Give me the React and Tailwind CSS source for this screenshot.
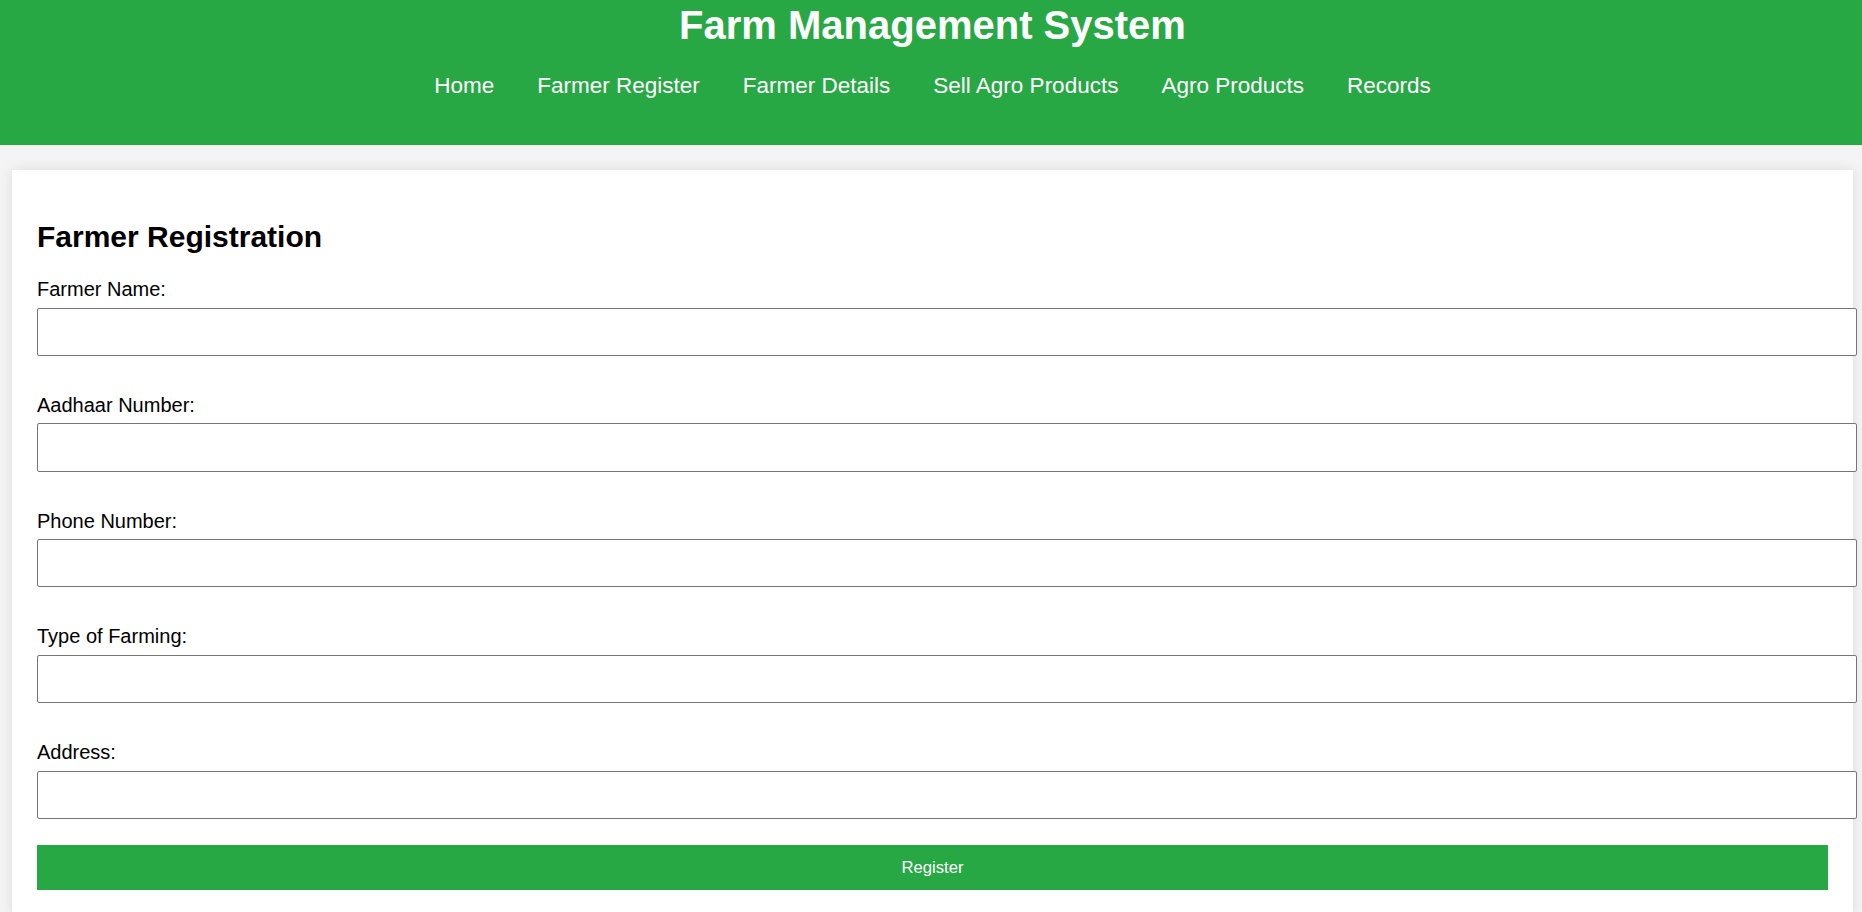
import React from "react";

const fields = [
  "Farmer Name:",
  "Aadhaar Number:",
  "Phone Number:",
  "Type of Farming:",
  "Address:",
];

const navItems = [
  "Home",
  "Farmer Register",
  "Farmer Details",
  "Sell Agro Products",
  "Agro Products",
  "Records",
];

export default function App() {
  return (
    <div
      className="min-h-[912px] bg-[#f4f4f4] text-black"
      style={{ fontFamily: '"Liberation Sans", Arial, sans-serif' }}
    >
      <header className="h-[145px] bg-[#28a745] pt-[2px] text-white">
        <h1 className="pl-[3px] text-center text-[40px] font-bold leading-[46px]">
          Farm Management System
        </h1>
        <nav className="mt-[25px] flex justify-center gap-[43px] pl-[3px] text-[22.5px] leading-[26px]">
          {navItems.map((item) => (
            <a key={item} href="#" className="text-white">
              {item}
            </a>
          ))}
        </nav>
      </header>

      <main className="ml-[12px] mr-[9px] mt-[25px] bg-white px-[25px] pb-[25px] pt-[25px] shadow-[0_0_12px_rgba(0,0,0,0.1)]">
        <h2 className="mb-[24px] mt-[24px] text-[30px] font-bold leading-[35px]">
          Farmer Registration
        </h2>
        <form onSubmit={(e) => e.preventDefault()}>
          {fields.map((label, i) => (
            <div key={label} className={i < fields.length - 1 ? "mb-[38px]" : ""}>
              <label className="mb-[6.5px] block text-[20px] leading-[23px]">
                {label}
              </label>
              <input
                type="text"
                className="block h-[48.3px] w-[calc(100%+29px)] rounded-[2px] border border-[#767676] bg-white px-[12px] text-[16.67px] outline-none"
              />
            </div>
          ))}
          <button
            type="submit"
            className="mt-[26px] block h-[45px] w-full bg-[#28a745] text-center text-[16.67px] leading-[45px] text-white"
          >
            Register
          </button>
        </form>
      </main>
    </div>
  );
}
